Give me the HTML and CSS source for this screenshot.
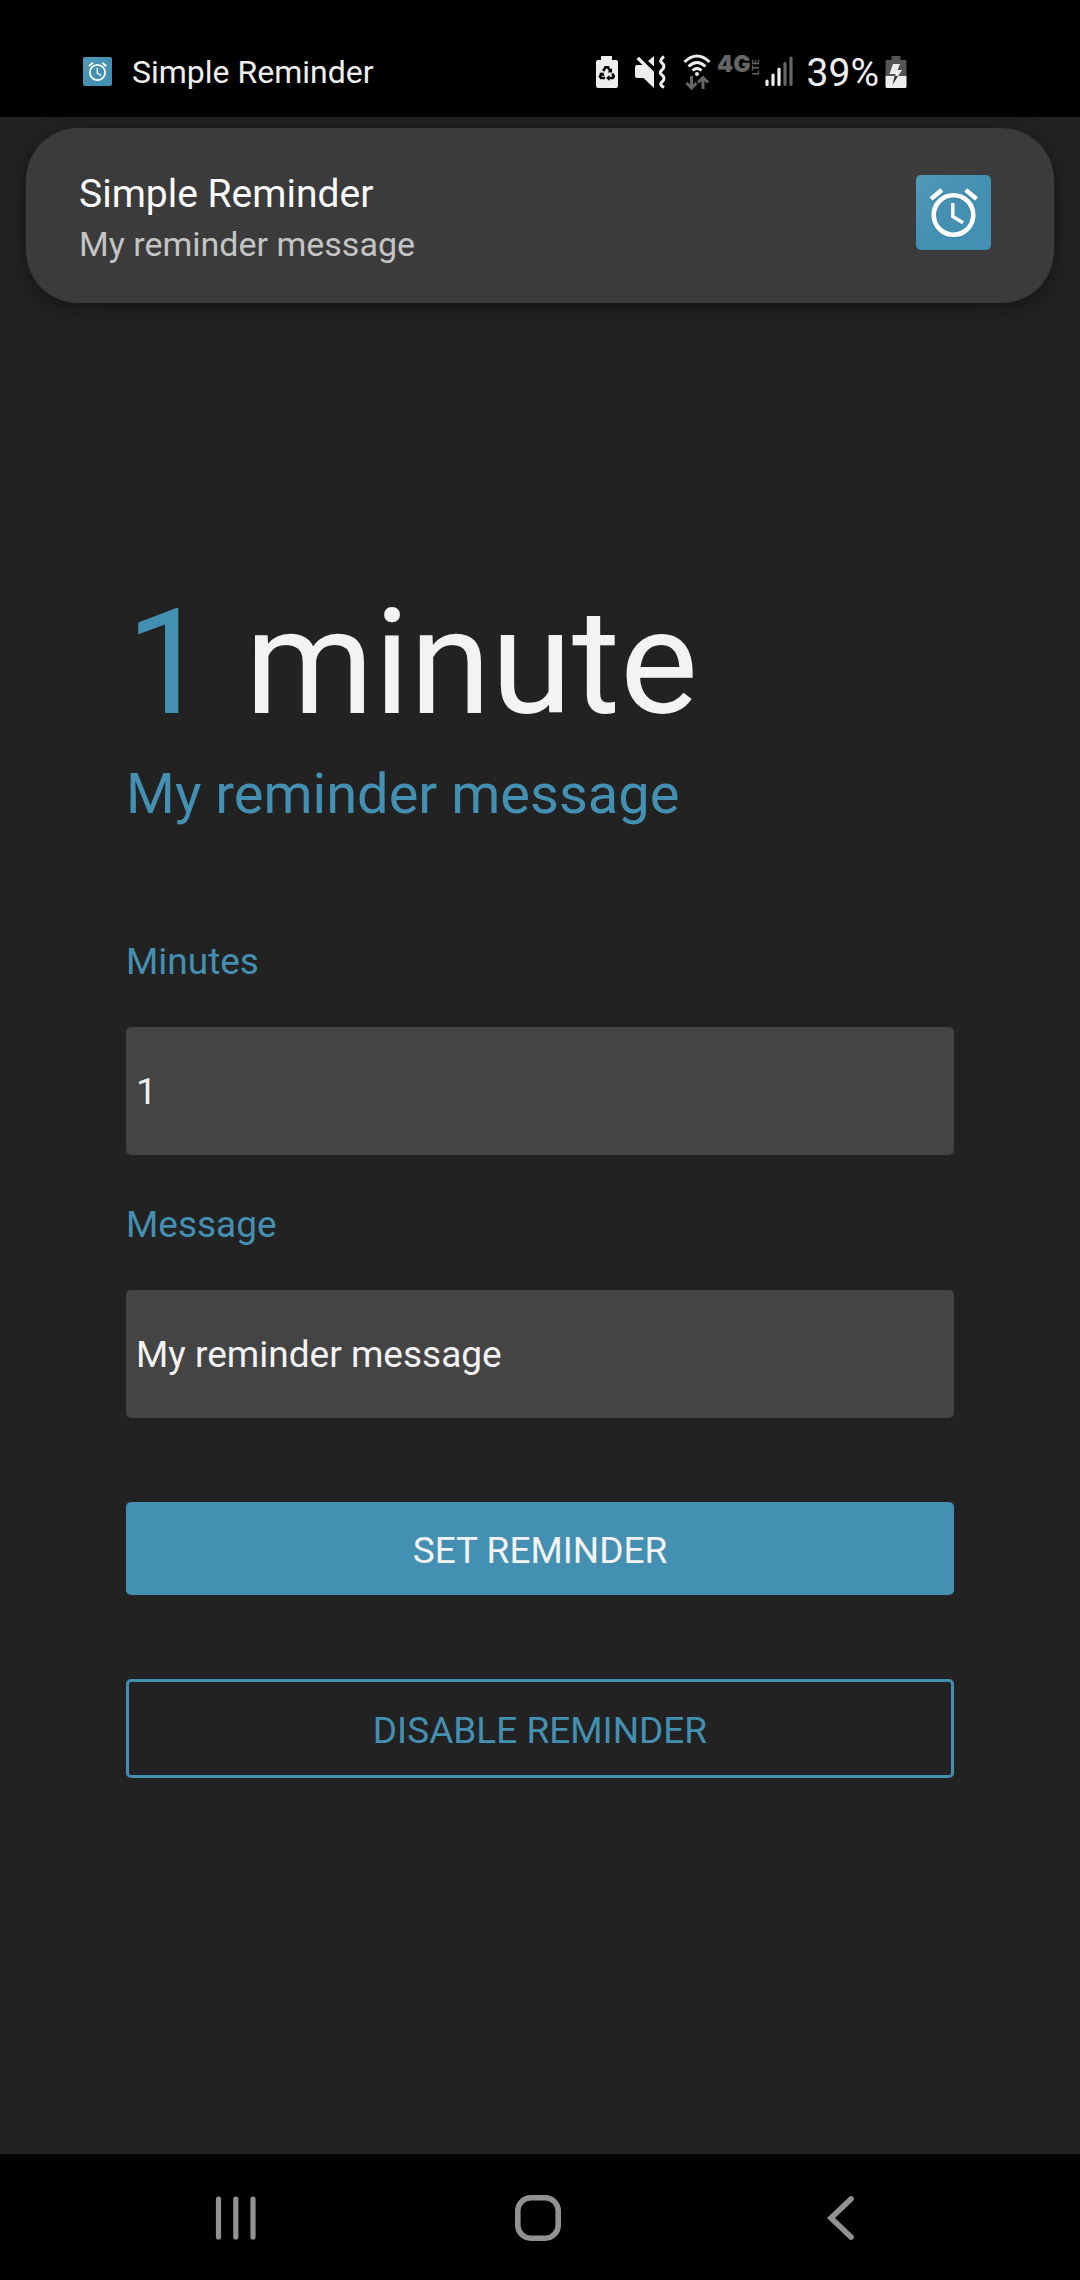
FILE: index.html
```html
<!DOCTYPE html>
<html lang="en">
<head>
<meta charset="utf-8">
<meta name="viewport" content="width=device-width, initial-scale=1">
<title>Simple Reminder</title>
<link rel="stylesheet" href="styles.css">
</head>
<body>
<svg class="defs" aria-hidden="true">
  <defs>
    <linearGradient id="tile" x1="0" y1="0" x2="1" y2="1">
      <stop offset="0" stop-color="#519ab8"/>
      <stop offset=".5" stop-color="#4490b2"/>
    </linearGradient>
    <symbol id="alarm" viewBox="0 0 75 75">
      <rect width="75" height="75" rx="5" fill="url(#tile)"/>
      <g fill="none" stroke="#327892" stroke-opacity=".5" stroke-width="5" transform="translate(0 1)">
        <circle cx="37.500" cy="40" r="19.800"/>
        <path d="M15 24.500 25.500 15.500M60 24.500 49.500 15.500"/>
      </g>
      <g fill="none" stroke="#fff">
        <circle cx="37.500" cy="40" r="19.800" stroke-width="4.600"/>
        <path d="M15 24 25.800 15M60.500 24 49.700 15" stroke-width="4.600"/>
        <path d="M36.800 28V41.500L47 47.800" stroke-width="3.400"/>
      </g>
    </symbol>
  </defs>
</svg>

<header class="status">
  <div class="status-app">
    <svg class="status-logo" aria-hidden="true"><use href="#alarm"/></svg>
    <span>Simple Reminder</span>
  </div>
  <div class="status-icons">
    <svg width="24" height="34" viewBox="0 0 24 34" role="img" aria-label="Battery saver">
      <path fill="#eee" d="M6 1h11v4h4q2 0 2 2v24q0 2-2 2H3q-2 0-2-2V7q0-2 2-2h3z"/>
      <path fill="none" stroke="#000" stroke-width="2.600" d="M8.200 16 10.500 12.200H13l2 3.500M17.300 18.500l1.500 3-1 1.500h-3.500M10 23H6l-1-1.500 2-3.500"/>
      <path d="M17 13v4.500h-4.500zM14.500 20v6L11 23zM4 18.500l4.500-1 1 4z"/>
    </svg>
    <svg width="34" height="34" viewBox="0 0 34 34" role="img" aria-label="Vibrate">
      <path fill="#eee" d="M3 10h5.500L2.500 4 5 1.700 20 16.700V33L9.500 23H3q-2 0-2-2v-9q0-2 2-2zM20 1v10.500L14 6z"/>
      <path d="M30 1.500q-5 4-2.500 6t2.500 4-2.500 4 0 4 2.500 4-2.500 4 2.500 5" stroke="#eee" stroke-width="3" fill="none"/>
    </svg>
    <svg width="28" height="36" viewBox="0 0 28 36" role="img" aria-label="Wi-Fi">
      <g fill="none" stroke="#eee" stroke-width="3">
        <path d="M1.500 8Q14-4 26.500 8M5.500 12.500q8.500-8 17 0M9.500 16.500q4.500-4 9 0"/>
      </g>
      <circle cx="14" cy="20" r="2" fill="#eee"/>
      <g fill="none" stroke="#666" stroke-width="3">
        <path d="M8.500 22v12M3.500 29l5 5 5-5M20 35V24M15 28.500l5-5 5 5"/>
      </g>
    </svg>
    <span class="network"><b class="network-gen">4G</b><small class="network-type">LTE</small></span>
    <svg class="signal" width="28" height="31" viewBox="0 0 28 31" role="img" aria-label="Signal">
      <g stroke-width="3.200" stroke-linecap="round">
        <path stroke="#eee" d="M2 25v3.500M8 19v9.500M14 13v15.500"/>
        <path stroke="#666" d="M20 7.500v21M26 2v26.500"/>
      </g>
    </svg>
    <span class="percent">39%</span>
    <svg width="22" height="34" viewBox="0 0 22 34" role="img" aria-label="Charging">
      <path fill="#555" d="M6.500 1h9v4H20q1.500 0 1.500 1.500V21H.500V6.500Q.500 5 2 5h4.500z"/>
      <path fill="#eee" d="M.500 21h21v10.500q0 1.500-1.500 1.500H2Q.500 33 .500 31.500z"/>
      <path fill="#eee" d="M8 9h7l-2.500 6H17l-4 6H10l1-2H4.500z"/>
      <path fill="#333" d="M9.500 21H13L7.500 30z"/>
    </svg>
  </div>
</header>

<aside class="notice">
  <div>
    <p class="notice-title">Simple Reminder</p>
    <p class="notice-text">My reminder message</p>
  </div>
  <svg class="notice-logo" role="img" aria-label="Simple Reminder"><use href="#alarm"/></svg>
</aside>

<main class="app">
  <h1 class="time"><span class="accent">1</span> minute</h1>
  <p class="summary">My reminder message</p>
  <form class="form">
    <label class="label" for="minutes">Minutes</label>
    <input class="field" id="minutes" type="text" inputmode="numeric" value="1">
    <label class="label" for="message">Message</label>
    <input class="field" id="message" type="text" value="My reminder message">
    <button class="button" type="button">SET REMINDER</button>
    <button class="button button-outline" type="button">DISABLE REMINDER</button>
  </form>
</main>

<nav class="nav">
  <button class="nav-button" type="button" aria-label="Recent apps">
    <svg width="48" height="48" viewBox="0 0 48 48" fill="none" stroke="#929292" stroke-width="5.200" stroke-linecap="round"><path d="M6.500 5v38M23.800 5v38M41 5v38"/></svg>
  </button>
  <button class="nav-button" type="button" aria-label="Home">
    <svg width="48" height="48" viewBox="0 0 48 48" fill="none" stroke="#929292" stroke-width="5.600"><rect x="3.800" y="3.800" width="40.400" height="40.400" rx="13"/></svg>
  </button>
  <button class="nav-button" type="button" aria-label="Back">
    <svg width="48" height="48" viewBox="0 0 48 48" fill="none" stroke="#929292" stroke-width="5.600" stroke-linecap="round"><path d="M35 5 15 24l20 19"/></svg>
  </button>
</nav>
</body>
</html>
```

FILE: styles.css
```css
* {
  box-sizing: border-box;
  margin: 0;
}

body {
  min-height: 100vh;
  display: flex;
  flex-direction: column;
  background: #222;
  color: #f3f3f3;
  font-family: Roboto, sans-serif;
}

svg {
  display: block;
  flex: none;
}

.defs {
  position: absolute;
  width: 0;
  height: 0;
}

/* Status bar */
.status {
  display: flex;
  justify-content: space-between;
  align-items: center;
  padding: 26px 173px 0 83px;
  height: 117px;
  background: #000;
  color: #eee;
}

.status-app {
  display: flex;
  align-items: center;
  gap: 20px;
  font-size: 32px;
}

.status-logo {
  width: 29px;
  height: 29px;
}

.status-icons {
  display: flex;
  align-items: center;
  gap: 15px;
}

.network {
  display: flex;
  height: 34px;
  margin-left: -9px;
  color: #666;
}

.network-gen {
  font: 900 23px/18px Inter, sans-serif;
}

.network-type {
  height: 20px;
  writing-mode: vertical-rl;
  transform: rotate(180deg);
  font: 700 9px/9px Inter, sans-serif;
}

.signal {
  margin-left: -10px;
}

.percent {
  font-size: 39px;
  line-height: 46px;
  padding-top: 2px;
  margin: 0 -9px 0 -1px;
}

/* Notification */
.notice {
  display: flex;
  justify-content: space-between;
  align-items: flex-start;
  margin: 11px 26px 0;
  padding: 40px 63px 34px 53px;
  border-radius: 52px;
  background: #3b3b3b;
  box-shadow: 0 4px 20px rgba(0, 0, 0, .4);
}

.notice-title {
  color: #fafafa;
  font-size: 39px;
  line-height: 52px;
}

.notice-text {
  color: #c4c4c4;
  font-size: 34px;
  line-height: 49px;
}

.notice-logo {
  width: 75px;
  height: 75px;
  margin-top: 7px;
}

/* Reminder form */
.app {
  flex: 1;
  padding: 273px 126px 84px;
}

.time {
  font-size: 147px;
  font-weight: 400;
  line-height: 174px;
}

.accent,
.summary,
.label {
  color: #4490b2;
}

.summary {
  margin-top: 11px;
  font-size: 56px;
  line-height: 66px;
}

.form {
  display: flex;
  flex-direction: column;
  margin-top: 65px;
}

.label {
  margin: 48px 0 43px;
  font-size: 37px;
  line-height: 44px;
}

.field,
.button {
  border: 0;
  border-radius: 5px;
  color: #f3f3f3;
  font: 400 37px/44px Roboto, sans-serif;
}

.field {
  width: 100%;
  height: 128px;
  padding: 0 10px;
  background: #444;
}

.button {
  margin-top: 84px;
  padding: 27px 16px 22px;
  background: #4490b2;
}

.button-outline {
  border: 3px solid #4490b2;
  background: none;
  color: #4490b2;
}

/* System navigation */
.nav {
  display: flex;
  justify-content: space-between;
  padding: 0 192px 0 188px;
  background: #000;
}

.nav-button {
  padding: 40px 24px 38px;
  border: 0;
  background: none;
}
```
